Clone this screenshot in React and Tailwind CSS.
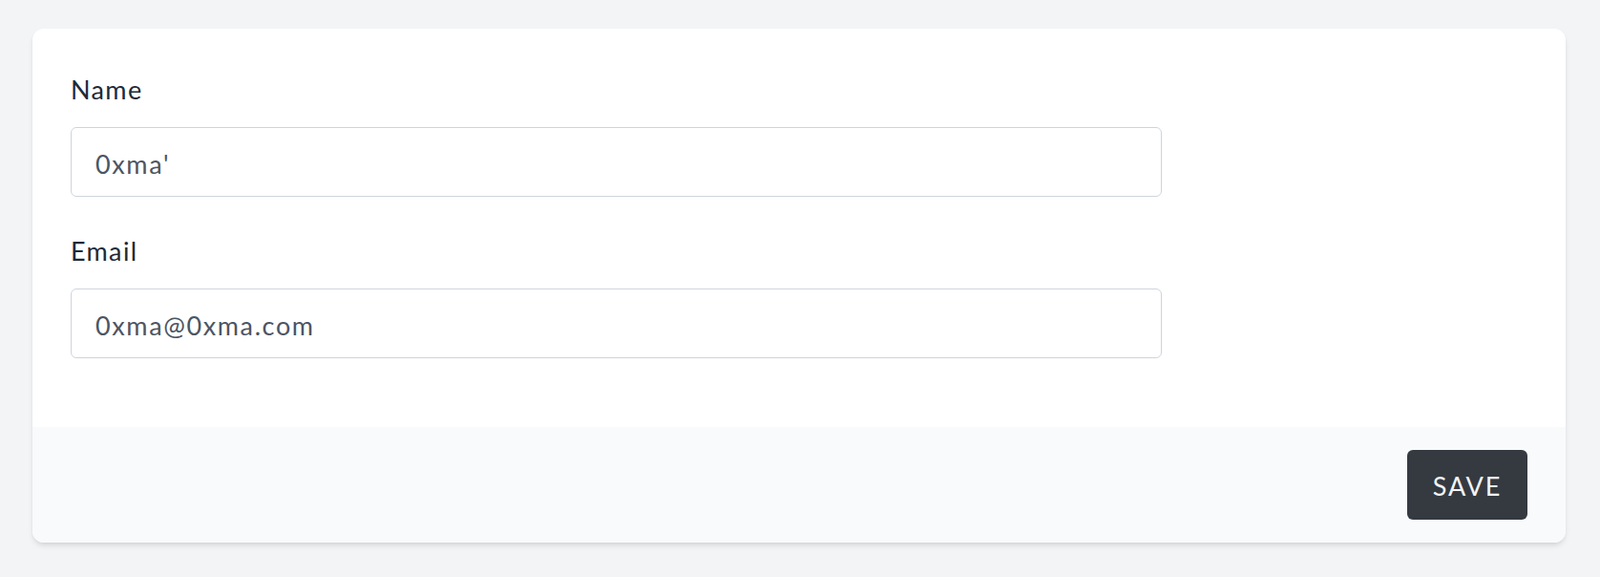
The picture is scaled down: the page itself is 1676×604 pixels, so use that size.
import React, { useState } from 'react';

const Field = ({ label, type = 'text', value, onChange, className = '' }) => (
    <div className={className}>
        <label className="block text-[27px] leading-[39px] tracking-[0.05em] text-[#1f2937]">{label}</label>
        <input
            type={type}
            value={value}
            onChange={(e) => onChange(e.target.value)}
            className="mt-[20px] block w-[1143px] h-[73px] px-[25px] pt-[4px] text-[27px] tracking-[0.06em] text-[#4b5563] bg-white border border-[#cfd4dc] rounded-md outline-none"
            style={{ fontFamily: 'inherit' }}
        />
    </div>
);

const App = () => {
    const [name, setName] = useState("0xma'");
    const [email, setEmail] = useState('0xma@0xma.com');

    return (
        <div
            className="min-h-screen bg-[#f3f4f6] pt-[30px] pl-[34px] pr-[36px]"
            style={{ fontFamily: 'Lato, "Open Sans", sans-serif' }}
        >
            <form
                onSubmit={(e) => e.preventDefault()}
                className="bg-white rounded-xl shadow-md overflow-hidden"
            >
                <div className="px-10 pt-[44px] pb-[72px]">
                    <Field label="Name" value={name} onChange={setName} />
                    <Field label="Email" type="email" value={email} onChange={setEmail} className="mt-[37px]" />
                </div>

                {/* footer */}
                <div className="bg-[#f9fafb] px-10 py-6 flex justify-end">
                    <button
                        type="submit"
                        className="w-[126px] h-[73px] pt-[3px] bg-[#353a41] text-[#f3f4f6] text-[27px] tracking-[0.07em] uppercase rounded-md"
                    >
                        Save
                    </button>
                </div>
            </form>
        </div>
    );
};

export default App;
